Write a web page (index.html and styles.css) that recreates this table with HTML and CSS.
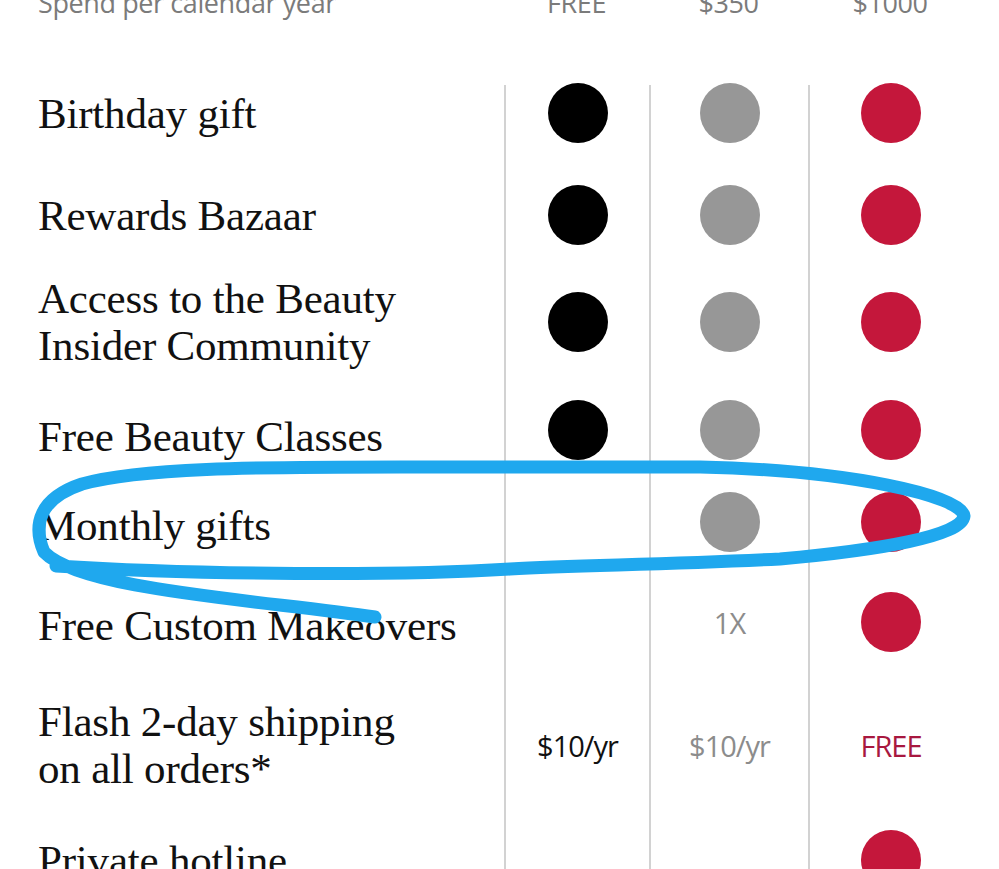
FILE: index.html
```html
<!DOCTYPE html>
<html lang="en">
<head>
<meta charset="utf-8">
<title>Beauty Insider benefits</title>
<link rel="stylesheet" href="styles.css">
</head>
<body>
<div class="page">
  <div class="header">
    <div class="h-label">Spend per calendar year</div>
    <div class="h-col">FREE</div>
    <div class="h-col">$350</div>
    <div class="h-col">$1000</div>
  </div>
  <div class="table">
    <div class="row r1">
      <div class="label">Birthday gift</div>
      <div class="cell"><span class="dot black"></span></div>
      <div class="cell"><span class="dot gray"></span></div>
      <div class="cell"><span class="dot red"></span></div>
    </div>
    <div class="row r2">
      <div class="label">Rewards Bazaar</div>
      <div class="cell"><span class="dot black"></span></div>
      <div class="cell"><span class="dot gray"></span></div>
      <div class="cell"><span class="dot red"></span></div>
    </div>
    <div class="row r3">
      <div class="label">Access to the Beauty<br>Insider Community</div>
      <div class="cell"><span class="dot black"></span></div>
      <div class="cell"><span class="dot gray"></span></div>
      <div class="cell"><span class="dot red"></span></div>
    </div>
    <div class="row r4">
      <div class="label">Free Beauty Classes</div>
      <div class="cell"><span class="dot black"></span></div>
      <div class="cell"><span class="dot gray"></span></div>
      <div class="cell"><span class="dot red"></span></div>
    </div>
    <div class="row r5">
      <div class="label">Monthly gifts</div>
      <div class="cell"></div>
      <div class="cell"><span class="dot gray"></span></div>
      <div class="cell"><span class="dot red"></span></div>
    </div>
    <div class="row r6">
      <div class="label">Free Custom Makeovers</div>
      <div class="cell"></div>
      <div class="cell"><span class="val v-gray">1X</span></div>
      <div class="cell"><span class="dot red"></span></div>
    </div>
    <div class="row r7">
      <div class="label">Flash 2-day shipping<br>on all orders*</div>
      <div class="cell"><span class="val v-black">$10/yr</span></div>
      <div class="cell"><span class="val v-gray">$10/yr</span></div>
      <div class="cell"><span class="val v-red">FREE</span></div>
    </div>
    <div class="row r8">
      <div class="label">Private hotline</div>
      <div class="cell"></div>
      <div class="cell"></div>
      <div class="cell"><span class="dot red"></span></div>
    </div>
  </div>
</div>
<svg class="scribble" width="999" height="869" viewBox="0 0 999 869" aria-hidden="true">
  <path d="M 375 617 C 260 600, 80 590, 44 552 C 32 524, 40 498, 82 484 C 140 468, 250 467, 400 467 L 700 467 C 850 470, 962 496, 964 516 C 962 536, 880 550, 780 559 C 660 565, 580 565, 510 569 C 400 576, 200 575, 56 566" />
</svg>
</body>
</html>
```

FILE: styles.css
```css
html, body {
  margin: 0;
  padding: 0;
  background: #ffffff;
}

body {
  position: relative;
  width: 999px;
  height: 869px;
  overflow: hidden;
}

.page {
  padding-left: 38px;
}

.header,
.row {
  display: grid;
  grid-template-columns: 466px 145px 159px 164px;
}

.header {
  margin-top: -12px;
  margin-bottom: 67px;
  height: 30px;
  font-family: "Open Sans", "Liberation Sans", sans-serif;
  font-size: 27px;
  line-height: 30px;
  color: #7b7b7b;
  letter-spacing: -0.4px;
}

.h-col {
  text-align: center;
}

.row {
  align-items: center;
}

.r1 { height: 79px; }
.r2 { height: 102px; }
.r3 { height: 112px; }
.r4 { height: 104px; }
.r5 { height: 80px; }
.r6 { height: 120px; }
.r7 { height: 126px; }
.r8 { height: 104px; }

.label {
  font-family: "Liberation Serif", "Times New Roman", serif;
  font-size: 43px;
  line-height: 47px;
  color: #111111;
  letter-spacing: -0.2px;
}

.r1 .label {
  align-self: start;
  margin-top: 5px;
}

.r4 .label {
  padding-top: 12px;
}

.r5 .label,
.r6 .label {
  padding-top: 6px;
}

.cell {
  height: 100%;
  border-left: 2px solid #d2d2d2;
  display: flex;
  align-items: center;
  justify-content: center;
  box-sizing: border-box;
}

.r1 .cell {
  align-items: flex-start;
}

.r1 .dot {
  margin-top: -2px;
}

.dot {
  width: 60px;
  height: 60px;
  border-radius: 50%;
  display: block;
}

.black { background: #000000; }
.gray { background: #979797; }
.red { background: #c4173b; }

.val {
  font-family: "Open Sans", "Liberation Sans", sans-serif;
  font-size: 29px;
  letter-spacing: -1px;
}

.v-black { color: #111111; }
.v-gray { color: #8c8c8c; }
.v-red { color: #a8183f; }

.scribble {
  position: absolute;
  left: 0;
  top: 0;
  pointer-events: none;
}

.scribble path {
  fill: none;
  stroke: #1fa8ee;
  stroke-width: 13;
  stroke-linecap: round;
  stroke-linejoin: round;
}
```
